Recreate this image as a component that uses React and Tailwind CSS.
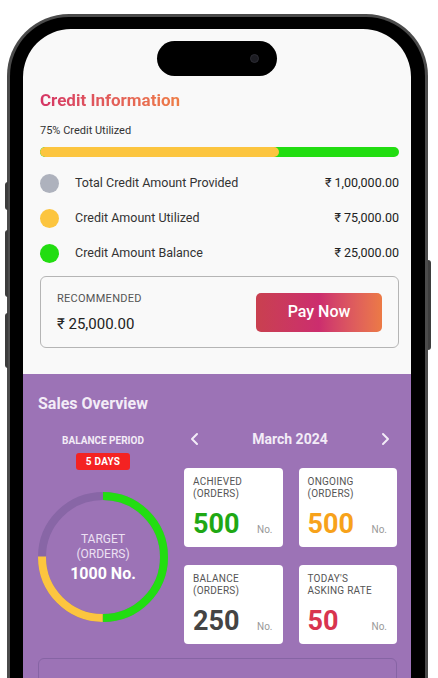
export default function App() {
  const rows = [
    { color: 'bg-[#aeb2bd]', label: 'Total Credit Amount Provided', value: '₹ 1,00,000.00' },
    { color: 'bg-[#fcc53f]', label: 'Credit Amount Utilized', value: '₹ 75,000.00' },
    { color: 'bg-[#22dd11]', label: 'Credit Amount Balance', value: '₹ 25,000.00' },
  ]

  const cards = [
    { title: ['ACHIEVED', '(ORDERS)'], value: '500', color: 'text-[#1fa814]' },
    { title: ['ONGOING', '(ORDERS)'], value: '500', color: 'text-[#f7a21b]' },
    { title: ['BALANCE', '(ORDERS)'], value: '250', color: 'text-[#444]' },
    { title: ["TODAY'S", 'ASKING RATE'], value: '50', color: 'text-[#d8344f]' },
  ]

  const r = 61
  const c = 2 * Math.PI * r

  return (
    <div className="w-[438px] h-[678px] bg-white overflow-hidden font-['Roboto',sans-serif]">
      <div className="relative ml-[7px] mt-[14px] w-[421px]">
        {/* side buttons */}
        <div className="absolute -left-[2px] top-[168px] w-[3px] h-[28px] rounded-l bg-[#3d3d3d]" />
        <div className="absolute -left-[2px] top-[216px] w-[3px] h-[67px] rounded-l bg-[#3d3d3d]" />
        <div className="absolute -left-[2px] top-[299px] w-[3px] h-[55px] rounded-l bg-[#3d3d3d]" />
        <div className="absolute -right-[3px] top-[246px] w-[3px] h-[90px] rounded-r bg-[#3d3d3d]" />

        <div className="border-[3px] border-b-0 border-[#4b4b4b] bg-black rounded-t-[62px] pt-[12px] pl-[13px] pr-[14px]">
          <div className="relative bg-[#f9f9f9] rounded-t-[48px] overflow-hidden h-[700px]">
            {/* dynamic island */}
            <div className="absolute left-[134px] top-[12px] w-[120px] h-[35px] rounded-full bg-black">
              <div className="absolute right-[18px] top-[13px] w-[9px] h-[9px] rounded-full bg-[#1c1c22] border border-[#2c2c34]" />
            </div>

            {/* Credit information */}
            <div className="pt-[60px] pl-[17px] pr-[12px] pb-[26px]">
              <h1 className="inline-block text-[17px] leading-[22px] font-bold bg-gradient-to-r from-[#d53565] to-[#ee7d46] bg-clip-text text-transparent">
                Credit Information
              </h1>
              <p className="mt-[11px] text-[11px] leading-[14px] text-[#333]">75% Credit Utilized</p>
              <div className="mt-[9px] h-[10px] rounded-full bg-[#22dd11] overflow-hidden flex">
                <div className="w-[66.5%] h-full bg-[#fcc53f] rounded-full" />
              </div>

              <div className="mt-[16px] flex flex-col gap-[15px]">
                {rows.map((row) => (
                  <div key={row.label} className="flex items-center h-[20px]">
                    <span className={`w-[19px] h-[19px] rounded-full ${row.color}`} />
                    <span className="ml-[16px] text-[12.5px] text-[#333]">{row.label}</span>
                    <span className="ml-auto text-[12.5px] text-[#222]">{row.value}</span>
                  </div>
                ))}
              </div>

              <div className="mt-[13px] h-[72px] border border-[#b5b5b5] rounded-[6px] flex items-center pl-[16px] pr-[16px]">
                <div>
                  <p className="text-[11px] leading-[14px] text-[#555] tracking-wide">RECOMMENDED</p>
                  <p className="mt-[9px] text-[15px] leading-[18px] text-[#222]">₹ 25,000.00</p>
                </div>
                <button className="ml-auto w-[126px] h-[39px] rounded-[5px] bg-gradient-to-r from-[#c9404f] via-[#cc2d6e] to-[#ec7a45] text-white text-[16px] font-medium">
                  Pay Now
                </button>
              </div>
            </div>

            {/* Sales overview */}
            <div className="bg-[#9c73b6] pl-[15px] pr-[14px] pt-[20px] h-[400px]">
              <h2 className="text-[16px] leading-[20px] font-bold text-[#f3ecf7]">Sales Overview</h2>

              <div className="mt-[13px] flex gap-[16px]">
                <div className="w-[130px] flex flex-col items-center">
                  <p className="text-[10px] leading-[12px] font-bold text-[#f3ecf7] mt-[8px]">BALANCE PERIOD</p>
                  <span className="mt-[6px] w-[54px] h-[17px] rounded-[3px] bg-[#f42222] text-white text-[10px] font-bold flex items-center justify-center tracking-wide">
                    5 DAYS
                  </span>
                  <div className="relative mt-[22px] w-[130px] h-[130px]">
                    <svg width="130" height="130" viewBox="0 0 130 130" className="-rotate-90">
                      <circle cx="65" cy="65" r={r} fill="none" stroke="#8866a6" strokeWidth="8" />
                      <circle cx="65" cy="65" r={r} fill="none" stroke="#22dd11" strokeWidth="8" strokeDasharray={`${c * 0.5} ${c}`} />
                      <circle cx="65" cy="65" r={r} fill="none" stroke="#fcc53f" strokeWidth="8" strokeDasharray={`${c * 0.25} ${c}`} strokeDashoffset={-c * 0.5} />
                    </svg>
                    <div className="absolute inset-0 flex flex-col items-center justify-center">
                      <p className="text-[12px] leading-[15px] text-[#ece0f3]">TARGET</p>
                      <p className="text-[12px] leading-[15px] text-[#ece0f3]">(ORDERS)</p>
                      <p className="mt-[2px] text-[16px] leading-[19px] font-bold text-white">1000 No.</p>
                    </div>
                  </div>
                </div>

                <div className="flex-1">
                  <div className="flex items-center justify-between px-[2px] h-[24px]">
                    <svg width="12" height="14" viewBox="0 0 12 14" className="ml-[3px]">
                      <path d="M8 2 L3 7 L8 12" fill="none" stroke="#f3ecf7" strokeWidth="2" strokeLinecap="round" strokeLinejoin="round" />
                    </svg>
                    <p className="text-[14px] font-bold text-[#f3ecf7]">March 2024</p>
                    <svg width="12" height="14" viewBox="0 0 12 14" className="mr-[4px]">
                      <path d="M4 2 L9 7 L4 12" fill="none" stroke="#f3ecf7" strokeWidth="2" strokeLinecap="round" strokeLinejoin="round" />
                    </svg>
                  </div>

                  <div className="mt-[17px] grid grid-cols-2 gap-x-[16px] gap-y-[18px]">
                    {cards.map((card) => (
                      <div key={card.title.join()} className="h-[79px] bg-white rounded-[4px] pl-[9px] pr-[10px] pt-[8px]">
                        <p className="text-[10px] leading-[12px] text-[#555] tracking-wide">{card.title[0]}</p>
                        <p className="text-[10px] leading-[12px] text-[#555] tracking-wide">{card.title[1]}</p>
                        <div className="mt-[9px] flex items-baseline justify-between">
                          <span className={`text-[27px] leading-[30px] font-bold ${card.color}`}>{card.value}</span>
                          <span className="text-[10px] text-[#999]">No.</span>
                        </div>
                      </div>
                    ))}
                  </div>
                </div>
              </div>

              <div className="mt-[14px] h-[60px] rounded-[6px] border border-[#8664a4]" />
            </div>
          </div>
        </div>
      </div>
    </div>
  )
}
